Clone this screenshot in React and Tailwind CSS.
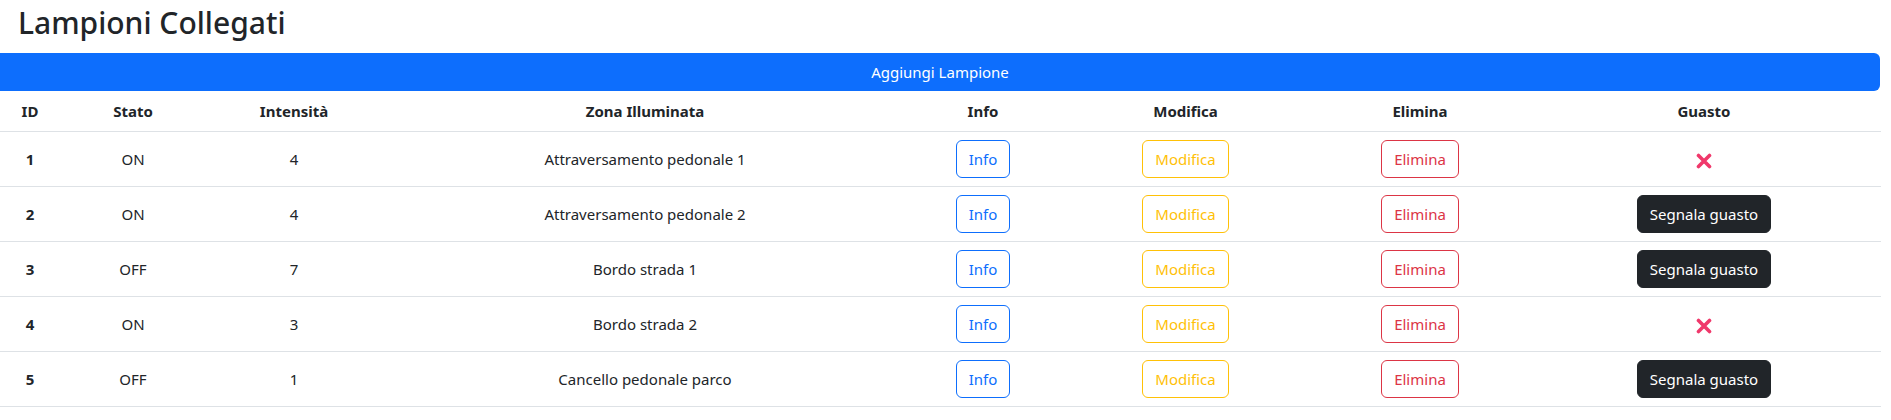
import React from 'react';

const lampioni = [
  { id: 1, stato: 'ON', intensita: 4, zona: 'Attraversamento pedonale 1', guasto: true },
  { id: 2, stato: 'ON', intensita: 4, zona: 'Attraversamento pedonale 2', guasto: false },
  { id: 3, stato: 'OFF', intensita: 7, zona: 'Bordo strada 1', guasto: false },
  { id: 4, stato: 'ON', intensita: 3, zona: 'Bordo strada 2', guasto: true },
  { id: 5, stato: 'OFF', intensita: 1, zona: 'Cancello pedonale parco', guasto: false },
];

function CrossMark() {
  return (
    <svg width="16" height="16" viewBox="0 0 16 16" className="inline-block align-middle">
      <path d="M2.5 2.5 L13.5 13.5 M13.5 2.5 L2.5 13.5" stroke="#f0386b" strokeWidth="3.6" strokeLinecap="round" />
    </svg>
  );
}

export default function App() {
  return (
    <div className="min-h-screen bg-white text-[#212529] font-['Noto_Sans',sans-serif]">
      <h2 className="pl-[18px] pt-[2px] text-[30px] leading-[41px] font-medium mb-[10px]">Lampioni Collegati</h2>

      <button className="block w-[1880px] h-[38px] bg-[#0d6efd] text-white text-[15px] rounded-r-[6px]">
        Aggiungi Lampione
      </button>

      <table className="table-fixed w-[1881px] border-collapse text-[15px]">
        <thead>
          <tr className="border-b border-[#dee2e6]">
            <th className="w-[60px] py-2 leading-6 font-bold">ID</th>
            <th className="w-[146px] py-2 leading-6 font-bold">Stato</th>
            <th className="w-[176px] py-2 leading-6 font-bold">Intensità</th>
            <th className="w-[526px] py-2 leading-6 font-bold">Zona Illuminata</th>
            <th className="w-[150px] py-2 leading-6 font-bold">Info</th>
            <th className="w-[255px] py-2 leading-6 font-bold">Modifica</th>
            <th className="w-[214px] py-2 leading-6 font-bold">Elimina</th>
            <th className="w-[354px] py-2 leading-6 font-bold">Guasto</th>
          </tr>
        </thead>
        <tbody>
          {lampioni.map((l) => (
            <tr key={l.id} className="border-b border-[#dee2e6] text-center">
              <td className="py-2 font-bold">{l.id}</td>
              <td className="py-2">{l.stato}</td>
              <td className="py-2">{l.intensita}</td>
              <td className="py-2">{l.zona}</td>
              <td className="py-2">
                <button className="px-3 py-1.5 leading-6 border border-[#0d6efd] text-[#0d6efd] rounded-md">Info</button>
              </td>
              <td className="py-2">
                <button className="px-3 py-1.5 leading-6 border border-[#ffc107] text-[#ffc107] rounded-md">Modifica</button>
              </td>
              <td className="py-2">
                <button className="px-3 py-1.5 leading-6 border border-[#dc3545] text-[#dc3545] rounded-md">Elimina</button>
              </td>
              <td className="py-2">
                {l.guasto ? (
                  <CrossMark />
                ) : (
                  <button className="px-3 py-1.5 leading-6 border border-[#212529] bg-[#212529] text-white rounded-md">Segnala guasto</button>
                )}
              </td>
            </tr>
          ))}
        </tbody>
      </table>
    </div>
  );
}
